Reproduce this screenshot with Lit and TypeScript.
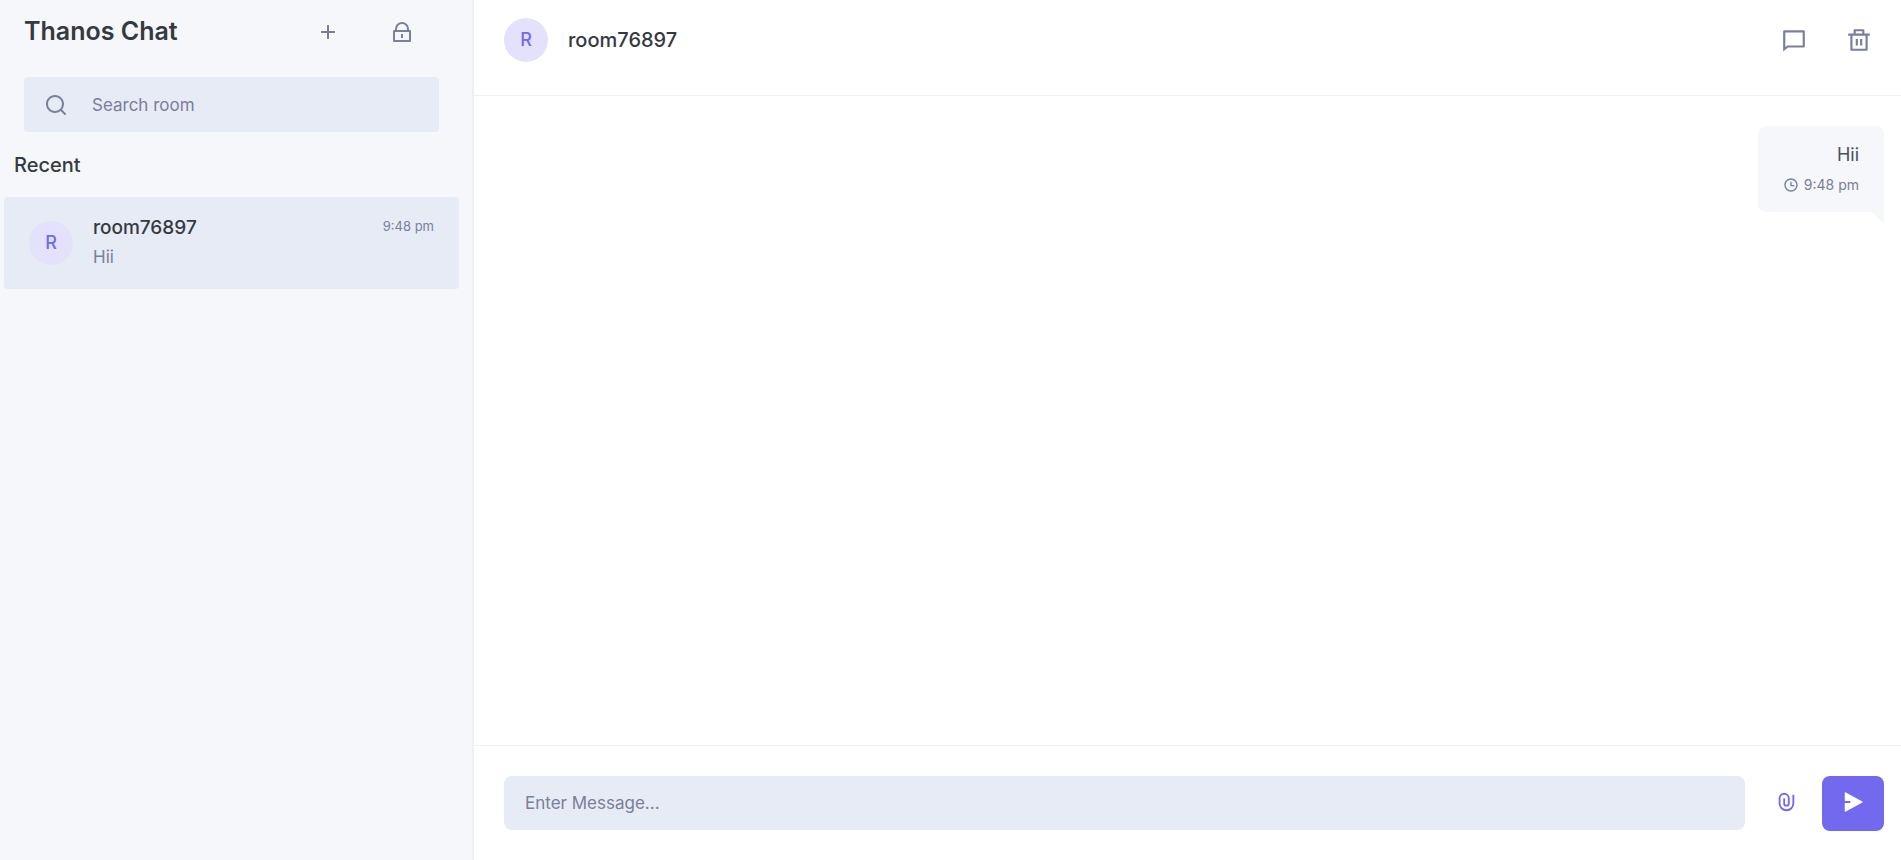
import { LitElement, html, css, svg } from "lit";
import { customElement, state } from "lit/decorators.js";

const ICONS = {
  add: "M11 11V5h2v6h6v2h-6v6h-2v-6H5v-2z",
  lock: "M19 10h1a1 1 0 0 1 1 1v10a1 1 0 0 1-1 1H4a1 1 0 0 1-1-1V11a1 1 0 0 1 1-1h1V9a7 7 0 1 1 14 0v1zM5 12v8h14v-8H5zm6 2h2v4h-2v-4zm6-4V9A5 5 0 0 0 7 9v1h10z",
  search:
    "M18.031 16.617l4.283 4.282-1.415 1.415-4.282-4.283A8.96 8.96 0 0 1 11 20c-4.968 0-9-4.032-9-9s4.032-9 9-9 9 4.032 9 9a8.96 8.96 0 0 1-1.969 5.617zm-2.006-.742A6.977 6.977 0 0 0 18 11c0-3.868-3.133-7-7-7-3.868 0-7 3.132-7 7 0 3.867 3.132 7 7 7a6.977 6.977 0 0 0 4.875-1.975l.15-.15z",
  message: "M6.455 19L2 22.5V4a1 1 0 0 1 1-1h18a1 1 0 0 1 1 1v14a1 1 0 0 1-1 1H6.455zm-.692-2H20V5H4v13.385L5.763 17z",
  trash:
    "M17 6h5v2h-2v13a1 1 0 0 1-1 1H5a1 1 0 0 1-1-1V8H2V6h5V3a1 1 0 0 1 1-1h8a1 1 0 0 1 1 1v3zm1 2H6v12h12V8zm-9 3h2v6H9v-6zm4 0h2v6h-2v-6zM9 4v2h6V4H9z",
  clock: "M12 22C6.477 22 2 17.523 2 12S6.477 2 12 2s10 4.477 10 10-4.477 10-10 10zm0-2a8 8 0 1 0 0-16 8 8 0 0 0 0 16zm1-8h4v2h-6V7h2v5z",
  attach:
    "M14 13.5V8a4 4 0 1 0-8 0v5.5a6.5 6.5 0 1 0 13 0V4h2v9.5a8.5 8.5 0 1 1-17 0V8a6 6 0 1 1 12 0v5.5a3.5 3.5 0 0 1-7 0V8h2v5.5a1.5 1.5 0 0 0 3 0z",
  send: "M3 13h6v-2H3V1.846a.5.5 0 0 1 .741-.438l18.462 10.154a.5.5 0 0 1 0 .876L3.741 22.592A.5.5 0 0 1 3 22.154V13z",
};

const icon = (name: keyof typeof ICONS) => html`
  <svg class="icon icon-${name}" viewBox="0 0 24 24" aria-hidden="true">${svg`<path d=${ICONS[name]}></path>`}</svg>
`;

@customElement("app-root")
export class AppRoot extends LitElement {
  @state() private rooms = [{ name: "room76897", last: "Hii", time: "9:48 pm" }];
  @state() private messages = [{ text: "Hii", time: "9:48 pm" }];

  static styles = css`
    :host {
      display: grid;
      grid-template-columns: 474px minmax(0, 1fr);
      height: 100vh;
      font-family: Inter, "Liberation Sans", sans-serif;
      font-size: 17px;
      line-height: 26px;
      color: #495057;
      background: #fff;
    }
    * {
      box-sizing: border-box;
    }
    h1, h2, h3, p, ul {
      margin: 0;
      padding: 0;
    }
    ul {
      list-style: none;
    }
    button, input {
      font: inherit;
      border: 0;
      margin: 0;
      padding: 0;
      background: none;
      color: inherit;
    }
    button {
      display: grid;
      place-items: center;
      cursor: pointer;
    }
    .icon {
      display: block;
      width: 24px;
      height: 24px;
      fill: currentColor;
      flex: none;
    }
    .icon-message, .icon-trash {
      width: 26px;
      height: 26px;
    }
    .icon-attach, .icon-send {
      width: 22px;
      height: 22px;
    }
    .icon-clock {
      width: 16px;
      height: 16px;
    }
    .sidebar {
      background: #f5f7fb;
      border-right: 2px solid #f0eff5;
    }
    .brand {
      display: flex;
      align-items: flex-start;
      padding: 14px 56px 0 24px;
    }
    .brand h1 {
      flex: 1;
      font-size: 25px;
      line-height: 34px;
      font-weight: 600;
      color: #343a40;
    }
    .tools {
      display: flex;
      gap: 46px;
      color: #7a7f9a;
    }
    .tools button {
      width: 28px;
      height: 36px;
    }
    .search {
      display: flex;
      align-items: center;
      gap: 24px;
      height: 55px;
      margin: 27px 33px 0 24px;
      padding: 0 20px;
      border-radius: 4px;
      background: #e6ebf5;
      color: #7a7f9a;
    }
    input {
      min-width: 0;
      flex: 1;
      outline: 0;
    }
    input::placeholder {
      color: #7a7f9a;
      opacity: 1;
    }
    .recent {
      padding: 20px 14px 19px;
      font-size: 20px;
      line-height: 26px;
      font-weight: 500;
      color: #343a40;
    }
    .room {
      display: flex;
      align-items: center;
      gap: 20px;
      height: 92px;
      margin: 0 13px 0 4px;
      padding: 0 25px;
      border-radius: 4px;
      background: #e6ebf5;
      color: inherit;
      text-decoration: none;
    }
    .avatar {
      display: grid;
      place-items: center;
      flex: none;
      width: 44px;
      height: 44px;
      border-radius: 50%;
      background: #e3e1fc;
      color: #7269ef;
      font-size: 18px;
      font-weight: 500;
    }
    .room-text {
      flex: 1;
      padding-top: 2px;
    }
    .name {
      font-size: 19px;
      line-height: 26px;
      font-weight: 500;
      color: #343a40;
    }
    .room-text p {
      line-height: 32px;
      color: #7a7f9a;
    }
    .time {
      font-size: 13px;
      line-height: 20px;
      color: #7a7f9a;
    }
    .room .time {
      align-self: flex-start;
      padding-top: 19px;
    }
    .chat {
      display: flex;
      flex-direction: column;
      min-width: 0;
    }
    .chat-head {
      display: flex;
      align-items: flex-start;
      gap: 20px;
      padding: 18px 28px 33px 30px;
      border-bottom: 1px solid #f0eff5;
    }
    .chat-head .name {
      flex: 1;
      font-size: 20px;
      line-height: 44px;
    }
    .actions {
      display: flex;
      gap: 37px;
      color: #7a7f9a;
    }
    .actions button {
      width: 28px;
      height: 44px;
    }
    .messages {
      flex: 1;
      overflow: auto;
      padding: 30px 17px;
    }
    .messages li {
      display: flex;
      justify-content: flex-end;
    }
    .bubble {
      position: relative;
      padding: 16px 25px;
      border-radius: 8px 8px 0 8px;
      background: #f5f7fb;
      text-align: right;
    }
    .bubble p {
      font-size: 18px;
    }
    .bubble::after {
      content: "";
      position: absolute;
      right: 0;
      top: 100%;
      border: 6px solid transparent;
      border-top-color: #f5f7fb;
      border-right-color: #f5f7fb;
    }
    .stamp {
      display: flex;
      align-items: center;
      gap: 5px;
      margin-top: 6px;
      font-size: 14px;
      line-height: 22px;
      color: #7a7f9a;
    }
    .composer {
      display: flex;
      padding: 30px 17px 29px 30px;
      border-top: 1px solid #f0eff5;
    }
    .composer input {
      height: 54px;
      padding: 0 21px;
      border-radius: 8px;
      background: #e6ebf5;
    }
    .attach {
      width: 77px;
      height: 52px;
      padding-left: 5px;
      color: #7269ef;
    }
    .send {
      width: 62px;
      height: 55px;
      padding-bottom: 3px;
      border-radius: 8px;
      background: #7269ef;
      color: #fff;
    }
  `;

  render() {
    return html`
      <aside class="sidebar">
        <header class="brand">
          <h1>Thanos Chat</h1>
          <div class="tools">
            <button type="button" aria-label="Create room">${icon("add")}</button>
            <button type="button" aria-label="Join private room">${icon("lock")}</button>
          </div>
        </header>
        <label class="search">
          ${icon("search")}
          <input type="text" placeholder="Search room" aria-label="Search room" />
        </label>
        <h2 class="recent">Recent</h2>
        <ul>
          ${this.rooms.map(
            (r) => html`<li>
              <a class="room" href="#${r.name}">
                <span class="avatar">${r.name[0].toUpperCase()}</span>
                <div class="room-text">
                  <h3 class="name">${r.name}</h3>
                  <p>${r.last}</p>
                </div>
                <span class="time">${r.time}</span>
              </a>
            </li>`
          )}
        </ul>
      </aside>
      <main class="chat">
        <header class="chat-head">
          <span class="avatar">R</span>
          <h2 class="name">${this.rooms[0].name}</h2>
          <div class="actions">
            <button type="button" aria-label="Messages">${icon("message")}</button>
            <button type="button" aria-label="Delete room">${icon("trash")}</button>
          </div>
        </header>
        <ul class="messages">
          ${this.messages.map(
            (m) => html`<li>
              <div class="bubble">
                <p>${m.text}</p>
                <div class="stamp">${icon("clock")}<span>${m.time}</span></div>
              </div>
            </li>`
          )}
        </ul>
        <form class="composer" @submit=${(e: Event) => e.preventDefault()}>
          <input type="text" placeholder="Enter Message..." aria-label="Enter Message" />
          <button class="attach" type="button" aria-label="Attach file">${icon("attach")}</button>
          <button class="send" type="submit" aria-label="Send">${icon("send")}</button>
        </form>
      </main>
    `;
  }
}
